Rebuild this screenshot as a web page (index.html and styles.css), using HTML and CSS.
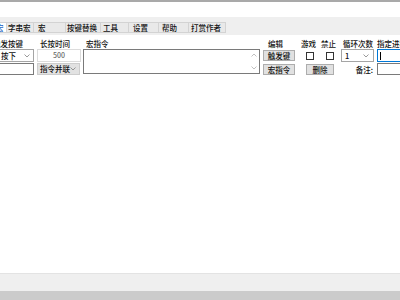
FILE: index.html
```html
<!DOCTYPE html>
<html lang="zh">
<head>
<meta charset="utf-8">
<link rel="stylesheet" href="styles.css">
</head>
<body>
<div class="app">
  <div class="titleline"></div>
  <div class="topgap"></div>
  <div class="tabbar">
    <div class="tab sel">按键宏</div>
    <div class="tab">字串宏</div>
    <div class="tab">宏</div>
    <div class="tab">按键替换</div>
    <div class="tab">工具</div>
    <div class="tab">设置</div>
    <div class="tab">帮助</div>
    <div class="tab">打赏作者</div>
  </div>
  <div class="panel">
    <div class="form">
      <div class="lbl c1 r1 l1">触发按键</div>
      <div class="lbl c2 r1 l2">长按时间</div>
      <div class="lbl c3 r1 l3">宏指令</div>
      <div class="lbl c4 r1 l4">编辑</div>
      <div class="lbl c5 r1 lc">游戏</div>
      <div class="lbl c6 r1 lc">禁止</div>
      <div class="lbl c7 r1 l7">循环次数</div>
      <div class="lbl c8 r1 l8">指定进程</div>

      <div class="combo c1 r2 key"><span>按下</span><svg width="6" height="4" viewBox="0 0 6 4"><polyline points="0.5,0.5 3,3 5.5,0.5" fill="none" stroke="#808080" stroke-width="0.8"/></svg></div>
      <div class="field c2 r2 time">500</div>
      <div class="memo">
        <div class="scroll">
          <svg width="6" height="4" viewBox="0 0 6 4"><polyline points="0.5,3.5 3,1 5.5,3.5" fill="none" stroke="#b0b0b0" stroke-width="0.8"/></svg>
          <svg width="6" height="4" viewBox="0 0 6 4"><polyline points="0.5,0.5 3,3 5.5,0.5" fill="none" stroke="#b0b0b0" stroke-width="0.8"/></svg>
        </div>
      </div>
      <div class="btn c4 r2">触发键</div>
      <div class="check c5 r2"></div>
      <div class="check c6 r2"></div>
      <div class="combo c7 r2 loop"><span>1</span><svg width="6" height="4" viewBox="0 0 6 4"><polyline points="0.5,0.5 3,3 5.5,0.5" fill="none" stroke="#808080" stroke-width="0.8"/></svg></div>
      <div class="field c8 r2 proc"><span class="caret"></span></div>

      <div class="field c1 r3 keyin"></div>
      <div class="combo c2 r3 mode"><span>指令并联</span><svg width="6" height="4" viewBox="0 0 6 4"><polyline points="0.5,0.5 3,3 5.5,0.5" fill="none" stroke="#808080" stroke-width="0.8"/></svg></div>
      <div class="btn c4 r3">宏指令</div>
      <div class="btn del r3">删除</div>
      <div class="lbl c7 r3 note">备注:</div>
      <div class="field c8 r3 notein"></div>
    </div>
  </div>
  <div class="status"></div>
  <div class="taskbar"></div>
</div>
</body>
</html>
```
FILE: styles.css
```css
html, body {
  margin: 0;
  padding: 0;
  background: #fff;
}

.app {
  width: 400px;
  height: 300px;
  overflow: hidden;
  display: flex;
  flex-direction: column;
  background: #fff;
  font-family: "Noto Sans CJK SC", "Noto Sans", sans-serif;
  font-size: 7.5px;
  font-weight: 500;
  color: #111;
}

.titleline {
  height: 2px;
  background: #a9a9a9;
  flex: none;
}

.topgap {
  height: 15px;
  flex: none;
}

.tabbar {
  height: 18px;
  flex: none;
  box-sizing: border-box;
  padding-top: 5px;
  background: #efefef;
  display: flex;
  align-items: flex-start;
}

.tab {
  height: 11px;
  box-sizing: border-box;
  border: 1px solid #d3d3d3;
  border-left: none;
  background: #e9e9e9;
  line-height: 9px;
  padding-left: 2px;
  white-space: nowrap;
  overflow: hidden;
  flex: none;
}

.tab.sel {
  background: #fff;
  margin-left: -24px;
  width: 31px;
  padding-left: 5px;
  color: #1a62c4;
}

.tab:nth-child(2) { width: 27px; padding-left: 1px; }
.tab:nth-child(3) { width: 32px; padding-left: 4px; }
.tab:nth-child(4) { width: 35px; padding-left: 1px; }
.tab:nth-child(5) { width: 28px; padding-left: 2px; }
.tab:nth-child(6) { width: 30px; padding-left: 4px; }
.tab:nth-child(7) { width: 30px; padding-left: 3px; }
.tab:nth-child(8) { width: 37px; padding-left: 2px; }

.panel {
  flex: 1;
  padding-top: 4px;
}

.form {
  display: grid;
  margin-left: -8px;
  grid-template-columns: 45px 46px 180px 36px 20px 20px 38px 40px;
  grid-template-rows: 9px 13px 12px;
  row-gap: 1px;
}

.c1 { grid-column: 1; }
.c2 { grid-column: 2; }
.c3 { grid-column: 3; }
.c4 { grid-column: 4; }
.c5 { grid-column: 5; }
.c6 { grid-column: 6; }
.c7 { grid-column: 7; }
.c8 { grid-column: 8; }
.r1 { grid-row: 1; }
.r2 { grid-row: 2; }
.r3 { grid-row: 3; }

.lbl {
  line-height: 9px;
  white-space: nowrap;
}

.l1 { padding-left: 1px; }
.l2 { padding-left: 3px; }
.l3 { padding-left: 3px; }
.l4 { padding-left: 5px; }
.lc { text-align: center; padding-right: 1px; }
.l7 { padding-left: 4px; }
.l8 { padding-left: 0; }

.combo {
  box-sizing: border-box;
  border: 1px solid #a5a5a5;
  background: #fff;
  display: flex;
  align-items: center;
  justify-content: space-between;
  line-height: 10px;
  white-space: nowrap;
}

.key {
  width: 42px;
  padding: 0 3px 0 8px;
}

.loop {
  margin-left: 2px;
  width: 33px;
  padding: 0 4px 0 3px;
}

.mode {
  width: 43px;
  background: #e2e2e2;
  border-color: #cdcdcd;
  padding: 0 3px 0 2px;
}

.field {
  box-sizing: border-box;
  border: 1px solid #7a7a7a;
  background: #fff;
}

.time {
  width: 44px;
  border-color: #dcdcdc;
  color: #6a6a6a;
  text-align: center;
  line-height: 11px;
  font-size: 7px;
}

.keyin {
  width: 42px;
}

.proc {
  width: 40px;
  border-color: #0078d7;
  display: flex;
  align-items: center;
  padding-left: 2px;
}

.caret {
  width: 1px;
  height: 8px;
  background: #000;
}

.notein {
  width: 40px;
}

.memo {
  grid-column: 3;
  grid-row: 2 / 4;
  width: 177px;
  height: 25px;
  box-sizing: border-box;
  border: 1px solid #7a7a7a;
  background: #fff;
  display: flex;
  justify-content: flex-end;
}

.scroll {
  width: 10px;
  display: flex;
  flex-direction: column;
  justify-content: space-between;
  align-items: center;
  padding: 3px 0;
}

.btn {
  width: 32px;
  height: 11px;
  align-self: center;
  box-sizing: border-box;
  border: 1px solid #adadad;
  background: #e1e1e1;
  text-align: center;
  line-height: 9px;
  white-space: nowrap;
}

.del {
  grid-column: 5 / 7;
  margin-left: 7px;
  width: 28px;
}

.check {
  width: 8px;
  height: 8px;
  box-sizing: border-box;
  border: 1px solid #333;
  background: #fff;
  justify-self: center;
  align-self: center;
  margin-left: 1px;
}

.note {
  text-align: right;
  padding-right: 4px;
  align-self: center;
}

.status {
  height: 18px;
  flex: none;
  box-sizing: border-box;
  border-top: 1px solid #e3e3e3;
  background: #efefef;
}

.taskbar {
  height: 9px;
  flex: none;
  background: #cbcbcb;
}
```
